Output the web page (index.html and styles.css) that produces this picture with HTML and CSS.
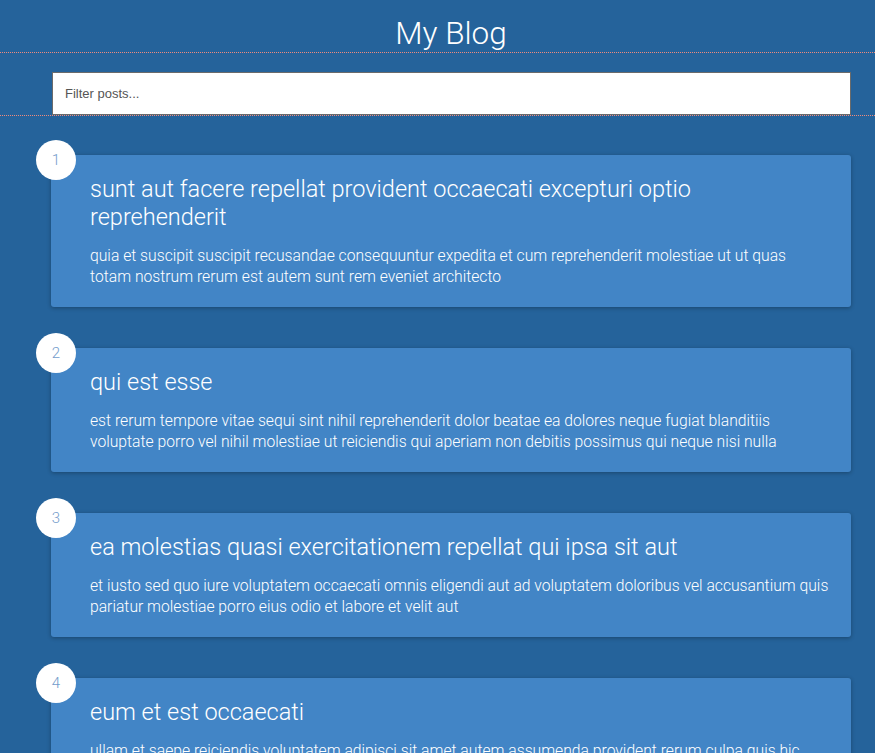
FILE: index.html
```html
<!DOCTYPE html>
<html>
<head>
<meta charset="utf-8">
<title>My Blog</title>
<link rel="stylesheet" href="styles.css">
</head>
<body>
<header class="site-header">
  <h1 class="site-title">My Blog</h1>
</header>
<div class="filter-bar">
  <input class="filter-input" type="text" placeholder="Filter posts...">
</div>
<main class="posts">
  <article class="post">
    <span class="post-num">1</span>
    <h2 class="post-title">sunt aut facere repellat provident occaecati excepturi optio reprehenderit</h2>
    <p class="post-body">quia et suscipit suscipit recusandae consequuntur expedita et cum reprehenderit molestiae ut ut quas totam nostrum rerum est autem sunt rem eveniet architecto</p>
  </article>
  <article class="post">
    <span class="post-num">2</span>
    <h2 class="post-title">qui est esse</h2>
    <p class="post-body">est rerum tempore vitae sequi sint nihil reprehenderit dolor beatae ea dolores neque fugiat blanditiis voluptate porro vel nihil molestiae ut reiciendis qui aperiam non debitis possimus qui neque nisi nulla</p>
  </article>
  <article class="post">
    <span class="post-num">3</span>
    <h2 class="post-title">ea molestias quasi exercitationem repellat qui ipsa sit aut</h2>
    <p class="post-body">et iusto sed quo iure voluptatem occaecati omnis eligendi aut ad voluptatem doloribus vel accusantium quis pariatur molestiae porro eius odio et labore et velit aut</p>
  </article>
  <article class="post">
    <span class="post-num">4</span>
    <h2 class="post-title">eum et est occaecati</h2>
    <p class="post-body">ullam et saepe reiciendis voluptatem adipisci sit amet autem assumenda provident rerum culpa quis hic commodi nesciunt rem tenetur doloremque ipsam iure quis sunt voluptatem rerum illo velit</p>
  </article>
</main>
</body>
</html>
```

FILE: styles.css
```css
html, body {
  margin: 0;
  padding: 0;
}
body {
  background: #25639b;
  font-family: Roboto, "Noto Sans", sans-serif;
  font-weight: 300;
  color: #ffffff;
  overflow: hidden;
}
.site-header {
  height: 52px;
  border-bottom: 1px dotted #f08a7c;
  display: flex;
  align-items: center;
  justify-content: center;
  padding-left: 27px;
}
.site-title {
  margin: 0;
  font-size: 31.5px;
  font-weight: 300;
  line-height: 36px;
  padding-top: 15px;
}
.filter-bar {
  padding: 19px 0 0 52px;
  border-bottom: 1px dotted #f08a7c;
  display: flex;
}
.filter-input {
  box-sizing: border-box;
  width: 799px;
  height: 43px;
  margin: 0;
  border: 1px solid #6b6b6b;
  background: #ffffff;
  padding: 0 12px;
  font-family: "Liberation Sans", Arial, sans-serif;
  font-size: 13px;
  color: #333;
  outline: none;
}
.filter-input::placeholder {
  color: #555555;
}
.posts {
  display: flex;
  flex-direction: column;
  gap: 41px;
  padding: 39px 0 0 51px;
}
.post {
  position: relative;
  box-sizing: border-box;
  width: 800px;
  background: #4285c6;
  border-radius: 3px;
  box-shadow: 0 1px 4px rgba(0, 0, 0, 0.3);
  padding: 20px 22px 20px 39px;
}
.post-num {
  position: absolute;
  left: -15px;
  top: -15px;
  width: 40px;
  height: 40px;
  border-radius: 50%;
  background: #ffffff;
  color: #739ccb;
  font-size: 15px;
  display: flex;
  align-items: center;
  justify-content: center;
}
.post-title {
  margin: 0 0 14px;
  font-size: 23.5px;
  font-weight: 300;
  line-height: 28px;
}
.post-body {
  margin: 0;
  font-size: 15.7px;
  line-height: 21px;
  font-weight: 300;
}
```
